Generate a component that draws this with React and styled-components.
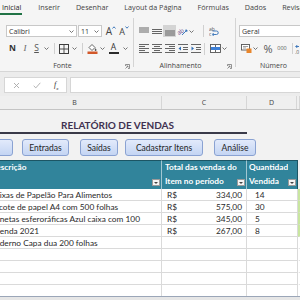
import React from "react";
import styled, {createGlobalStyle} from "styled-components";

const GlobalStyle = createGlobalStyle`
  html, body {
    margin: 0;
    padding: 0;
    background: #ffffff;
  }
  body {
    width: 300px;
    height: 300px;
    overflow: hidden;
  }
`;

const Screen = styled.div`
  width: 300px;
  height: 300px;
  overflow: hidden;
  display: flex;
  flex-direction: column;
  font-family: "Open Sans", "Noto Sans", sans-serif;
  background: #f5f5f5;
`;

const TabBar = styled.div`
  height: 15px;
  flex-shrink: 0;
  display: flex;
  gap: 16px;
  background: #f5f5f5;
`;

const Tab = styled.div`
  height: 15px;
  box-sizing: border-box;
  padding-left: ${(p) => (p.$active ? 2 : 0)}px;
  padding-right: ${(p) => (p.$active ? 1 : 0)}px;
  font-size: 7.2px;
  line-height: 15px;
  white-space: nowrap;
  color: ${(p) => (p.$active ? "#262626" : "#444")};
  box-shadow: ${(p) => (p.$active ? "inset 0 -2px 0 #217346" : "none")};
`;

const Ribbon = styled.div`
  height: 57px;
  flex-shrink: 0;
  box-sizing: border-box;
  display: flex;
  background: #f5f5f5;
  border-bottom: 1px solid #d6d6d6;
`;

const Group = styled.div`
  width: ${(p) => p.$w}px;
  flex-shrink: 0;
  display: flex;
  flex-direction: column;
  padding-top: 10px;
  box-sizing: border-box;
`;

const GroupDivider = styled.div`
  width: 1px;
  flex-shrink: 0;
  margin: 3px 0 4px;
  background: #d4d4d4;
`;

const Row = styled.div`
  display: flex;
  align-items: center;
  height: ${(p) => p.$h || 12}px;
  margin-top: ${(p) => p.$mt || 0}px;
  padding-left: ${(p) => p.$pl || 0}px;
`;

const Combo = styled.div`
  width: ${(p) => p.$w}px;
  height: 12px;
  margin-left: ${(p) => p.$ml || 0}px;
  flex-shrink: 0;
  box-sizing: border-box;
  display: flex;
  align-items: center;
  justify-content: space-between;
  padding: 0 2px 0 2px;
  background: #ffffff;
  border: 1px solid #c8c8c8;
  font-size: 7px;
  color: #333;
`;

const Btn = styled.div`
  width: ${(p) => p.$w || 12}px;
  height: ${(p) => p.$h || 11}px;
  margin-left: ${(p) => p.$ml || 0}px;
  flex-shrink: 0;
  display: flex;
  align-items: center;
  justify-content: center;
  background: ${(p) => (p.$on ? "#d4d4d4" : "transparent")};
  color: #444;
  font-size: ${(p) => p.$fs || 9}px;
  line-height: 1;
`;

const BoldN = styled.span`
  font-weight: 700;
  font-size: 8.5px;
  color: #333;
`;

const ItalicI = styled.span`
  font-family: "Liberation Serif", serif;
  font-style: italic;
  font-size: 9px;
  color: #666;
`;

const UnderS = styled.span`
  text-decoration: underline;
  font-size: 8.5px;
  color: #555;
`;

const BigA = styled.span`
  font-size: ${(p) => p.$fs || 10}px;
  color: #444;
`;

const ColorA = styled.div`
  display: flex;
  flex-direction: column;
  align-items: center;
  font-size: 8.5px;
  color: #333;
  line-height: 8px;

  &::after {
    content: "";
    width: 10px;
    height: 2px;
    margin-top: 1px;
    background: #2b2b2b;
  }
`;

const VSep = styled.div`
  width: 1px;
  height: ${(p) => p.$h || 11}px;
  flex-shrink: 0;
  margin-left: ${(p) => p.$ml || 0}px;
  margin-right: ${(p) => p.$mr || 0}px;
  background: #d0d0d0;
`;

const SmallText = styled.span`
  font-size: ${(p) => p.$fs || 6}px;
  color: #555;
`;

const GroupFoot = styled.div`
  margin-top: auto;
  height: 10px;
  display: flex;
  align-items: center;
`;

const GroupLabel = styled.span`
  flex: 1;
  text-align: center;
  font-size: 7px;
  line-height: 10px;
  color: #444;
`;

const LauncherBox = styled.div`
  width: 5px;
  height: 5px;
  margin-right: 3px;
  display: flex;
`;

const FormulaBar = styled.div`
  height: 24px;
  flex-shrink: 0;
  box-sizing: border-box;
  display: flex;
  gap: 3px;
  padding: 5px 0 0 4px;
  background: #ececec;
`;

const FxBox = styled.div`
  width: 63px;
  height: 16px;
  box-sizing: border-box;
  background: #ffffff;
  border: 1px solid #d6d6d6;
  display: flex;
  align-items: center;
  padding-left: 8px;
  gap: 13px;
`;

const FxText = styled.span`
  font-family: "Liberation Serif", serif;
  font-style: italic;
  font-size: 8px;
  color: #333;

  sub {
    font-size: 5px;
  }
`;

const FormulaInput = styled.div`
  flex: 1;
  height: 16px;
  box-sizing: border-box;
  background: #ffffff;
  border: 1px solid #d6d6d6;
  border-right: none;
`;

const ColHeaders = styled.div`
  height: 14px;
  flex-shrink: 0;
  box-sizing: border-box;
  display: grid;
  grid-template-columns: 174px 85px 50px 1fr;
  margin-left: -12px;
  background: #efefef;
  border-bottom: 1px solid #c4c4c4;
`;

const ColHead = styled.div`
  border-right: 1px solid #d6d6d6;
  text-align: center;
  font-size: 7px;
  line-height: 13px;
  color: #444;
`;

const Sheet = styled.div`
  flex: 1;
  min-height: 0;
  overflow: hidden;
  margin-left: -12px;
  width: 330px;
  background: #f2f2f2;
  font-family: Lato, "Liberation Sans", sans-serif;
`;

const TitleRow = styled.div`
  width: 259px;
  height: 22px;
  display: flex;
  align-items: flex-end;
  justify-content: center;
  border-bottom: 2px solid #3a3a48;
`;

const Title = styled.div`
  font-size: 10px;
  line-height: 12px;
  font-weight: 700;
  color: #3f3151;
  margin-bottom: 1px;
`;

const ButtonRow = styled.div`
  display: flex;
  height: 17px;
  padding: 5px 0 4px;
`;

const MacroButton = styled.div`
  width: ${(p) => p.$w}px;
  margin-left: ${(p) => p.$ml}px;
  flex-shrink: 0;
  box-sizing: border-box;
  height: 17px;
  display: flex;
  align-items: center;
  justify-content: center;
  border: 1px solid #8aa2d2;
  border-radius: 3px;
  background: linear-gradient(#e2eafb, #c4d5f3);
  font-size: 8.5px;
  color: #1e1e1e;
  white-space: nowrap;
`;

const Table = styled.div`
  display: grid;
  grid-template-columns: 174px 85px 51px 20px;
  grid-template-rows: 29px;
  grid-auto-rows: 12px;
`;

const HeadCell = styled.div`
  height: 29px;
  box-sizing: border-box;
  display: flex;
  align-items: flex-end;
  padding-left: ${(p) => p.$pl || 2}px;
  background: #31849b;
  border-top: 1px solid #1c5564;
  border-right: 1px solid ${(p) => (p.$last ? "#1c5564" : "rgba(255,255,255,0.55)")};
  color: #ffffff;
  font-weight: 700;
  font-size: 8.3px;
  line-height: 13.5px;
`;

const HeadText = styled.div`
  flex: 1;
  align-self: flex-start;
  white-space: nowrap;
  overflow: hidden;
`;

const FilterBtn = styled.div`
  width: 8px;
  height: 7px;
  flex-shrink: 0;
  margin: 0 1px 3px 0;
  box-sizing: border-box;
  background: #f4f4f4;
  border: 1px solid #9a9a9a;
  display: flex;
  align-items: center;
  justify-content: center;
`;

const EHead = styled.div`
  height: 29px;
  background: #f2f2f2;
`;

const Cell = styled.div`
  height: 12px;
  box-sizing: border-box;
  display: flex;
  align-items: center;
  justify-content: ${(p) => (p.$split ? "space-between" : "flex-start")};
  padding: 0 ${(p) => p.$pr || 0}px 0 ${(p) => p.$pl || 2}px;
  background: #ffffff;
  border-right: 1px solid #dadada;
  border-bottom: 1px solid #dadada;
  font-size: 8.3px;
  color: #2a2a2a;
  white-space: nowrap;
  overflow: hidden;
`;

const ECell = styled.div`
  height: 12px;
  box-sizing: border-box;
  background: #ffffff;
  border-bottom: 1px solid #dadada;
  border-left: 2px solid ${(p) => (p.$mark ? "#c9e6a0" : "#ffffff")};
`;

const SheetTabs = styled.div`
  height: 3px;
  flex-shrink: 0;
  background: #e6e6e6;
  border-top: 1px solid #9ba6b8;
`;

const Caret = () => (
  <svg width="5" height="3" viewBox="0 0 5 3">
    <path d="M0.5 0.5L2.5 2.5L4.5 0.5" fill="none" stroke="#666" strokeWidth="0.9"/>
  </svg>
);

const Launcher = () => (
  <LauncherBox>
    <svg width="5" height="5" viewBox="0 0 5 5">
      <path d="M0.5 2V0.5H4.5V4.5H3" fill="none" stroke="#777" strokeWidth="0.8"/>
      <path d="M0.5 4.5L3 2M3 2H1.5M3 2V3.5" fill="none" stroke="#777" strokeWidth="0.8"/>
    </svg>
  </LauncherBox>
);

const GrowMark = ({down}) => (
  <svg width="4" height="3" viewBox="0 0 4 3" style={{alignSelf: "flex-start"}}>
    <path d={down ? "M0.5 0.5L2 2.2L3.5 0.5" : "M0.5 2.5L2 0.8L3.5 2.5"} fill="none" stroke="#2f6db5" strokeWidth="0.9"/>
  </svg>
);

const BorderIcon = () => (
  <svg width="10" height="10" viewBox="0 0 10 10">
    <rect x="0.5" y="0.5" width="9" height="9" fill="none" stroke="#3c3c3c" strokeWidth="1"/>
    <path d="M5 1V9M1 5H9" stroke="#3c3c3c" strokeWidth="0.9"/>
  </svg>
);

const FillIcon = () => (
  <svg width="11" height="11" viewBox="0 0 11 11">
    <path d="M2 4.5L5 1.5L8 4.5L5 7.5Z" fill="#fff" stroke="#555" strokeWidth="0.9"/>
    <path d="M8.6 5.3C9.2 6.2 9.5 6.6 9.5 7A.9.9 0 0 1 7.7 7C7.7 6.6 8 6.2 8.6 5.3Z" fill="#555"/>
    <rect x="0.5" y="8.5" width="10" height="2.5" fill="#d2582a"/>
  </svg>
);

const Lines = ({rows, h = 10}) => (
  <svg width="10" height={h} viewBox={`0 0 10 ${h}`}>
    {rows.map(([x1, x2, y], i) => (
      <path key={i} d={`M${x1} ${y}H${x2}`} stroke="#555" strokeWidth="0.9"/>
    ))}
  </svg>
);

const IndentIcon = ({dir}) => (
  <svg width="10" height="9" viewBox="0 0 10 9">
    <path d="M0 0.5H10M5 3.5H10M5 5.5H10M0 8.5H10" stroke="#555" strokeWidth="0.9"/>
    <path d={dir === "in" ? "M0.5 2.5L3 4.5L0.5 6.5Z" : "M3 2.5L0.5 4.5L3 6.5Z"} fill="#2f6db5"/>
  </svg>
);

const OrientIcon = () => (
  <svg width="11" height="10" viewBox="0 0 11 10">
    <text x="0" y="8" fontSize="6" fill="#6c4a8a" fontFamily="Open Sans, sans-serif" transform="rotate(-35 3 6)">ab</text>
    <path d="M5 9L10 4" stroke="#2f6db5" strokeWidth="0.9"/>
    <path d="M10 4L8 4.3M10 4L9.7 6" stroke="#2f6db5" strokeWidth="0.9"/>
  </svg>
);

const WrapIcon = () => (
  <svg width="10" height="11" viewBox="0 0 10 11">
    <text x="0" y="4.5" fontSize="5" fill="#555" fontFamily="Open Sans, sans-serif">ab</text>
    <text x="0" y="10" fontSize="5" fill="#555" fontFamily="Open Sans, sans-serif">c</text>
    <path d="M4 8.5H7.5A1.7 1.7 0 0 0 7.5 5H3.5" fill="none" stroke="#2f6db5" strokeWidth="0.9"/>
    <path d="M4.5 7L3.5 8.5L4.5 10" fill="none" stroke="#2f6db5" strokeWidth="0.9"/>
  </svg>
);

const MergeIcon = () => (
  <svg width="11" height="9" viewBox="0 0 11 9">
    <rect x="0.5" y="0.5" width="10" height="8" fill="#fff" stroke="#555" strokeWidth="0.9"/>
    <rect x="1" y="3" width="9" height="3" fill="#3d7fd6"/>
    <path d="M5.5 1V3M5.5 6V8" stroke="#555" strokeWidth="0.9"/>
  </svg>
);

const MoneyIcon = () => (
  <svg width="11" height="9" viewBox="0 0 11 9">
    <rect x="0.5" y="0.5" width="8" height="5.5" fill="#fff" stroke="#555" strokeWidth="0.9"/>
    <path d="M2 2.5H7M2 4H5" stroke="#777" strokeWidth="0.7"/>
    <rect x="5.5" y="4.5" width="5" height="4.5" fill="#e8862c"/>
  </svg>
);

const DecimalIcon = () => (
  <svg width="12" height="10" viewBox="0 0 12 10">
    <path d="M4 2.5H0.8M0.8 2.5L2.3 1M0.8 2.5L2.3 4" fill="none" stroke="#2f6db5" strokeWidth="0.9"/>
    <text x="0" y="9.5" fontSize="5" fill="#555" fontFamily="Open Sans, sans-serif">.0</text>
  </svg>
);

const CrossIcon = () => (
  <svg width="7" height="7" viewBox="0 0 7 7">
    <path d="M1 1L6 6M6 1L1 6" stroke="#a8a8a8" strokeWidth="0.9"/>
  </svg>
);

const CheckIcon = () => (
  <svg width="8" height="7" viewBox="0 0 8 7">
    <path d="M0.7 3.8L2.8 5.9L7.3 0.8" fill="none" stroke="#a8a8a8" strokeWidth="0.9"/>
  </svg>
);

const FilterArrow = () => (
  <svg width="4" height="2" viewBox="0 0 4 2">
    <path d="M0 0H4L2 2Z" fill="#444"/>
  </svg>
);

const tabs = ["Inicial", "Inserir", "Desenhar", "Layout da Página", "Fórmulas", "Dados", "Revisão"];

const buttons = [
  {label: "", w: 33, ml: -8},
  {label: "Entradas", w: 47, ml: 9},
  {label: "Saídas", w: 38, ml: 11},
  {label: "Cadastrar Itens", w: 78, ml: 7},
  {label: "Análise", w: 42, ml: 11},
];

const vendas = [
  {item: "Caixas de Papelão Para Alimentos", total: "334,00", qtd: "14"},
  {item: "Pacote de papel A4 com 500 folhas", total: "575,00", qtd: "30"},
  {item: "Canetas esferoráficas Azul caixa com 100", total: "345,00", qtd: "5"},
  {item: "Agenda 2021", total: "267,00", qtd: "8"},
  {item: "Caderno Capa dua 200 folhas", total: "", qtd: ""},
  {item: "", total: "", qtd: ""},
  {item: "", total: "", qtd: ""},
  {item: "", total: "", qtd: ""},
  {item: "", total: "", qtd: ""},
];

const App = () => {
  return (
    <>
      <GlobalStyle/>
      <Screen>
        <TabBar>
          {tabs.map((t, i) => (
            <Tab key={t} $active={i === 0}>{t}</Tab>
          ))}
        </TabBar>

        <Ribbon>
          <Group $w={133}>
            <Row $pl={6}>
              <Combo $w={71}><span>Calibri</span><Caret/></Combo>
              <Combo $w={24} $ml={1}><span>11</span><Caret/></Combo>
              <Btn $w={12} $ml={3}><BigA>A</BigA><GrowMark/></Btn>
              <Btn $w={12} $ml={1}><BigA $fs={9}>A</BigA><GrowMark down/></Btn>
            </Row>
            <Row $pl={6} $mt={6} $h={11}>
              <Btn $w={13}><BoldN>N</BoldN></Btn>
              <Btn $w={12}><ItalicI>I</ItalicI></Btn>
              <Btn $w={11}><UnderS>S</UnderS></Btn>
              <Btn $w={9}><Caret/></Btn>
              <VSep $ml={3} $mr={3}/>
              <Btn $w={12}><BorderIcon/></Btn>
              <Btn $w={8}><Caret/></Btn>
              <VSep $ml={4} $mr={3}/>
              <Btn $w={12}><FillIcon/></Btn>
              <Btn $w={8}><Caret/></Btn>
              <Btn $w={15}><ColorA>A</ColorA></Btn>
              <Btn $w={8}><Caret/></Btn>
            </Row>
            <GroupFoot>
              <GroupLabel>Fonte</GroupLabel>
              <Launcher/>
            </GroupFoot>
          </Group>
          <GroupDivider/>

          <Group $w={101}>
            <Row $pl={3}>
              <Btn $w={13}><Lines h={9} rows={[[0, 10, 1], [0, 10, 3], [0, 10, 5]]}/></Btn>
              <Btn $w={13}><Lines h={9} rows={[[0, 10, 2.5], [0, 10, 4.5], [0, 10, 6.5]]}/></Btn>
              <Btn $w={13} $h={12} $on><Lines h={9} rows={[[0, 10, 4], [0, 10, 6], [0, 10, 8]]}/></Btn>
              <Btn $w={12}><OrientIcon/></Btn>
              <Btn $w={7}><Caret/></Btn>
              <VSep $ml={8} $mr={4} $h={12}/>
              <Btn $w={12}><WrapIcon/></Btn>
            </Row>
            <Row $pl={3} $mt={6} $h={11}>
              <Btn $w={13}><Lines h={9} rows={[[0, 10, 0.5], [0, 6, 2.5], [0, 10, 4.5], [0, 6, 6.5], [0, 10, 8.5]]}/></Btn>
              <Btn $w={13}><Lines h={9} rows={[[0, 10, 0.5], [2, 8, 2.5], [0, 10, 4.5], [2, 8, 6.5], [0, 10, 8.5]]}/></Btn>
              <Btn $w={13}><Lines h={9} rows={[[0, 10, 0.5], [4, 10, 2.5], [0, 10, 4.5], [4, 10, 6.5], [0, 10, 8.5]]}/></Btn>
              <Btn $w={13}><IndentIcon dir="out"/></Btn>
              <Btn $w={14}><IndentIcon dir="in"/></Btn>
              <VSep $ml={1} $mr={4} $h={12}/>
              <Btn $w={12}><MergeIcon/></Btn>
              <Btn $w={7}><Caret/></Btn>
            </Row>
            <GroupFoot>
              <GroupLabel>Alinhamento</GroupLabel>
              <Launcher/>
            </GroupFoot>
          </Group>
          <GroupDivider/>

          <Group $w={83}>
            <Row $pl={3}>
              <Combo $w={78}><span>Geral</span><Caret/></Combo>
            </Row>
            <Row $pl={4} $mt={6} $h={11}>
              <Btn $w={12}><MoneyIcon/></Btn>
              <Btn $w={7}><Caret/></Btn>
              <Btn $w={14} $ml={2}><SmallText $fs={11}>%</SmallText></Btn>
              <Btn $w={12} $ml={1}><SmallText $fs={5.5}>000</SmallText></Btn>
              <VSep $ml={4} $mr={2}/>
              <Btn $w={12}><DecimalIcon/></Btn>
            </Row>
            <GroupFoot>
              <GroupLabel>Número</GroupLabel>
              <Launcher/>
            </GroupFoot>
          </Group>
        </Ribbon>

        <FormulaBar>
          <FxBox>
            <CrossIcon/>
            <CheckIcon/>
            <FxText>f<sub>x</sub></FxText>
          </FxBox>
          <FormulaInput/>
        </FormulaBar>

        <ColHeaders>
          <ColHead>B</ColHead>
          <ColHead>C</ColHead>
          <ColHead>D</ColHead>
          <ColHead/>
        </ColHeaders>

        <Sheet>
          <TitleRow>
            <Title>RELATÓRIO DE VENDAS</Title>
          </TitleRow>

          <ButtonRow>
            {buttons.map((b, i) => (
              <MacroButton key={i} $w={b.w} $ml={b.ml}>{b.label}</MacroButton>
            ))}
          </ButtonRow>

          <Table>
            <HeadCell $pl={2}>
              <HeadText>Descrição</HeadText>
              <FilterBtn><FilterArrow/></FilterBtn>
            </HeadCell>
            <HeadCell $pl={3}>
              <HeadText>Total das vendas do<br/>Item no período</HeadText>
              <FilterBtn><FilterArrow/></FilterBtn>
            </HeadCell>
            <HeadCell $pl={2} $last>
              <HeadText>Quantidade<br/>Vendida</HeadText>
              <FilterBtn><FilterArrow/></FilterBtn>
            </HeadCell>
            <EHead/>

            {vendas.map((v, i) => (
              <React.Fragment key={i}>
                <Cell $pl={2}>{v.item}</Cell>
                <Cell $pl={5} $pr={4} $split>
                  {v.total && <span>R$</span>}
                  {v.total && <span>{v.total}</span>}
                </Cell>
                <Cell $pl={8}>{v.qtd}</Cell>
                <ECell $mark={i < 4}/>
              </React.Fragment>
            ))}
          </Table>
        </Sheet>

        <SheetTabs/>
      </Screen>
    </>
  );
};

export default App;
